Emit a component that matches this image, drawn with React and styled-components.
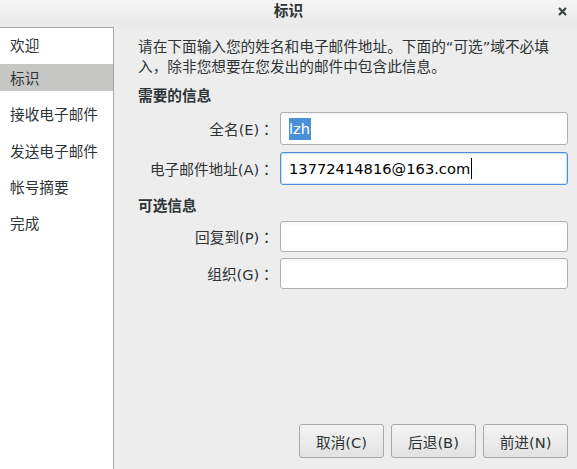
import styled, { createGlobalStyle } from "styled-components";

const GlobalStyle = createGlobalStyle`
  html, body {
    margin: 0;
    padding: 0;
    background: #ededed;
  }
  body {
    font-family: "DejaVu Sans", "Noto Sans CJK SC", sans-serif;
    font-size: 14.67px;
    color: #2e3436;
  }
`;

const Window = styled.div`
  width: 577px;
  height: 469px;
  display: flex;
  flex-direction: column;
  background: #ededed;
  overflow: hidden;
`;

const TitleBar = styled.header`
  height: 27px;
  flex: none;
  position: relative;
  display: flex;
  align-items: center;
  justify-content: center;
  background: linear-gradient(#f5f5f5, #e9e9e9);
`;

const Title = styled.h1`
  margin: 0 0 9px;
  font-size: 14.67px;
  font-weight: bold;
  color: #2e3436;
`;

const CloseButton = styled.svg`
  position: absolute;
  right: 10px;
  top: 7px;
`;

const Body = styled.div`
  flex: 1;
  display: flex;
  min-height: 0;
`;

const Sidebar = styled.nav`
  width: 113px;
  flex: none;
  background: #ffffff;
  border-top: 1px solid #a9a9a9;
  border-right: 1px solid #a9a9a9;
  display: flex;
  flex-direction: column;
  padding-top: 3px;
`;

const SideItem = styled.div`
  height: 27px;
  flex: none;
  margin-bottom: ${(p) => (p.$first ? "6px" : "9.3px")};
  padding-left: 10px;
  display: flex;
  align-items: center;
  background: ${(p) => (p.$active ? "#c6c7c5" : "transparent")};
  color: #2e3436;
`;

const Content = styled.main`
  flex: 1;
  display: flex;
  flex-direction: column;
  padding: 10px 9px 11px 24px;
`;

const Intro = styled.p`
  margin: 0;
  line-height: 20px;
  padding-right: 4px;
`;

/* full-width colon drawn centred, as in the original theme */
const Colon = styled.span`
  font-family: "Noto Sans CJK TC", sans-serif;
`;

const SectionTitle = styled.h2`
  margin: ${(p) => p.$top} 0 ${(p) => p.$bottom};
  font-size: 14.67px;
  font-weight: bold;
  line-height: 20px;
`;

const FieldGrid = styled.div`
  display: grid;
  grid-template-columns: 136px 1fr;
  column-gap: 6px;
  row-gap: ${(p) => p.$gap};
  align-items: center;
`;

const FieldLabel = styled.label`
  text-align: right;
  white-space: nowrap;
`;

const Field = styled.div`
  height: ${(p) => p.$h}px;
  box-sizing: border-box;
  border: 1px solid ${(p) => (p.$focused ? "#4a90d9" : "#b0b0b0")};
  border-radius: 3px;
  background: linear-gradient(#f6f6f6, #ffffff 4px);
  display: flex;
  align-items: center;
  padding-left: 8px;
  box-shadow: ${(p) => (p.$focused ? "inset 0 0 0 1px rgba(74,144,217,0.25)" : "none")};
`;

const Selected = styled.span`
  background: #4a90d9;
  color: #ffffff;
  line-height: 22px;
  padding-right: 1px;
`;

const Caret = styled.span`
  display: inline-block;
  width: 1px;
  height: 21px;
  background: #000;
  vertical-align: middle;
  margin-left: 1px;
`;

const FieldText = styled.span`
  color: #000;
  display: flex;
  align-items: center;
`;

const Footer = styled.div`
  margin-top: auto;
  display: flex;
  justify-content: flex-end;
  gap: 7px;
`;

const Button = styled.button`
  width: 85px;
  height: 34px;
  font: inherit;
  color: #2e3436;
  border: 1px solid #a8a8a8;
  border-radius: 3px;
  background: linear-gradient(#f4f4f4, #e2e2e2);
  padding: 0;
`;

const navItems = ["欢迎", "标识", "接收电子邮件", "发送电子邮件", "帐号摘要", "完成"];

export default function App() {
  return (
    <Window>
      <GlobalStyle />
      <TitleBar>
        <Title>标识</Title>
        <CloseButton width="9" height="9" viewBox="0 0 9 9">
          <path d="M1 1 L8 8 M8 1 L1 8" stroke="#3c4446" strokeWidth="2.2" />
        </CloseButton>
      </TitleBar>
      <Body>
        <Sidebar>
          {navItems.map((item, i) => (
            <SideItem key={item} $first={i === 0} $active={item === "标识"}>
              {item}
            </SideItem>
          ))}
        </Sidebar>
        <Content>
          <Intro>
            请在下面输入您的姓名和电子邮件地址。下面的“可选”域不必填入，除非您想要在您发出的邮件中包含此信息。
          </Intro>
          <SectionTitle $top="9px" $bottom="6px">需要的信息</SectionTitle>
          <FieldGrid $gap="7px">
            <FieldLabel>全名(E)<Colon>：</Colon></FieldLabel>
            <Field $h={33}>
              <FieldText>
                <Selected>lzh</Selected>
              </FieldText>
            </Field>
            <FieldLabel>电子邮件地址(A)<Colon>：</Colon></FieldLabel>
            <Field $h={33} $focused>
              <FieldText>
                13772414816@163.com
                <Caret />
              </FieldText>
            </Field>
          </FieldGrid>
          <SectionTitle $top="11px" $bottom="5px">可选信息</SectionTitle>
          <FieldGrid $gap="6px">
            <FieldLabel>回复到(P)<Colon>：</Colon></FieldLabel>
            <Field $h={31} />
            <FieldLabel>组织(G)<Colon>：</Colon></FieldLabel>
            <Field $h={31} />
          </FieldGrid>
          <Footer>
            <Button>取消(C)</Button>
            <Button>后退(B)</Button>
            <Button>前进(N)</Button>
          </Footer>
        </Content>
      </Body>
    </Window>
  );
}
